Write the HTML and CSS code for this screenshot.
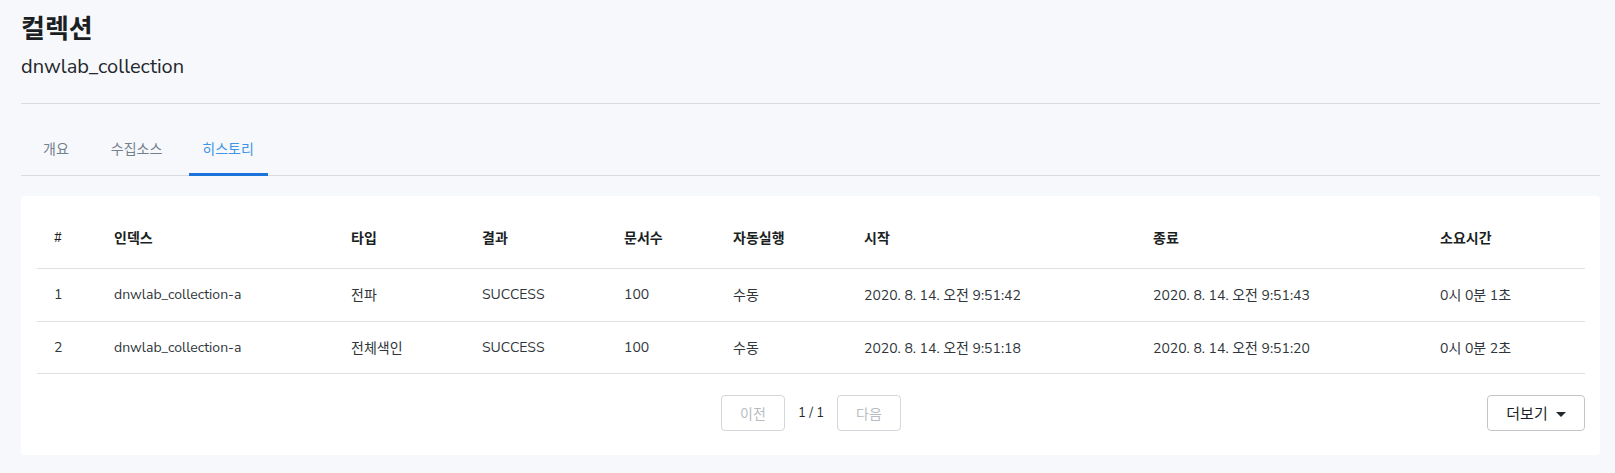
FILE: index.html
```html
<!DOCTYPE html>
<html lang="ko">
<head>
<meta charset="utf-8">
<title>컬렉션</title>
<link rel="stylesheet" href="styles.css">
</head>
<body>
<main class="page">
  <header class="page-head">
    <h1 class="title">컬렉션</h1>
    <div class="subtitle">dnwlab_collection</div>
  </header>
  <nav class="tabs">
    <a class="tab tab-1">개요</a>
    <a class="tab tab-2">수집소스</a>
    <a class="tab tab-3 active">히스토리</a>
  </nav>
  <section class="card">
    <div class="grid" role="table">
      <div class="row head" role="row">
        <div class="cell num" role="columnheader">#</div>
        <div class="cell" role="columnheader">인덱스</div>
        <div class="cell" role="columnheader">타입</div>
        <div class="cell" role="columnheader">결과</div>
        <div class="cell" role="columnheader">문서수</div>
        <div class="cell" role="columnheader">자동실행</div>
        <div class="cell" role="columnheader">시작</div>
        <div class="cell" role="columnheader">종료</div>
        <div class="cell" role="columnheader">소요시간</div>
      </div>
      <div class="row" role="row">
        <div class="cell">1</div>
        <div class="cell idx">dnwlab_collection-a</div>
        <div class="cell">전파</div>
        <div class="cell">SUCCESS</div>
        <div class="cell">100</div>
        <div class="cell">수동</div>
        <div class="cell">2020. 8. 14. 오전 9:51:42</div>
        <div class="cell">2020. 8. 14. 오전 9:51:43</div>
        <div class="cell">0시 0분 1초</div>
      </div>
      <div class="row" role="row">
        <div class="cell">2</div>
        <div class="cell idx">dnwlab_collection-a</div>
        <div class="cell">전체색인</div>
        <div class="cell">SUCCESS</div>
        <div class="cell">100</div>
        <div class="cell">수동</div>
        <div class="cell">2020. 8. 14. 오전 9:51:18</div>
        <div class="cell">2020. 8. 14. 오전 9:51:20</div>
        <div class="cell">0시 0분 2초</div>
      </div>
    </div>
    <div class="foot">
      <div class="pager">
        <button class="btn pg" disabled>이전</button>
        <span class="count">1 / 1</span>
        <button class="btn pg" disabled>다음</button>
      </div>
      <button class="btn more">더보기 <span class="caret"></span></button>
    </div>
  </section>
</main>
</body>
</html>
```

FILE: styles.css
```css
* { box-sizing: border-box; }
html, body { margin: 0; padding: 0; }
body {
  background: #f7f8fb;
  color: #23282c;
  font-family: "Nunito Sans", Lato, "Noto Sans CJK KR", sans-serif;
}
.page {
  padding: 10px 15px 0 21px;
}
.page-head {
  border-bottom: 1px solid #d8dbe0;
  padding-bottom: 24px;
}
.title {
  margin: 0;
  font-size: 26px;
  line-height: 40px;
  font-weight: 700;
  color: #1b1f23;
}
.subtitle {
  margin-top: 5px;
  font-size: 20px;
  line-height: 24px;
  color: #23282c;
}
.tabs {
  display: flex;
  margin-top: 24px;
  border-bottom: 1px solid #d8dbe0;
}
.tab {
  display: block;
  font-size: 14px;
  line-height: 20px;
  padding: 12px 13px 14px;
  color: #73818f;
  border-bottom: 2px solid transparent;
  margin-bottom: -1px;
}
.tab-1 { margin-left: 9px; }
.tab-2 { margin-left: 16px; }
.tab-3 { margin-left: 14px; }
.tab.active {
  color: #3d95e8;
  border-bottom: 3px solid #1a73d9;
  padding: 12px 14px 13px 13px;
}
.card {
  margin-top: 20px;
  background: #fff;
  border-radius: 4px;
  padding: 16px 15px 24px 16px;
}
.grid {
  font-size: 14px;
}
.row {
  display: grid;
  grid-template-columns: 60px 237px 131px 142px 109px 131px 289px 287px 1fr;
  align-items: center;
  height: 52.5px;
  border-bottom: 1px solid #dee0e3;
  color: #2f353a;
}
.row.head {
  height: 57px;
  padding-bottom: 5px;
  font-weight: 700;
  color: #1b1f23;
}
.cell {
  padding-left: 17px;
  white-space: nowrap;
}
.row.head .num { font-weight: 400; font-size: 13px; }
.cell.idx { font-size: 14px; }
.foot {
  position: relative;
  display: flex;
  justify-content: center;
  align-items: center;
  padding-top: 21px;
}
.pager {
  display: flex;
  align-items: center;
  gap: 12px;
}
.btn {
  font-family: inherit;
  font-size: 14px;
  height: 36px;
  background: #fff;
  border: 1px solid #d3d6da;
  border-radius: 4px;
  padding: 0;
}
.pg {
  width: 64px;
  color: #b8bcc0;
}
.count {
  font-size: 13px;
  color: #23282c;
  width: 28px;
  text-align: center;
}
.more {
  position: absolute;
  right: 0;
  bottom: 0;
  width: 98px;
  color: #1b1f23;
  border-color: #c2c6ca;
  font-size: 15px;
  display: flex;
  align-items: center;
  justify-content: center;
  gap: 8px;
}
.caret {
  display: inline-block;
  width: 0;
  height: 0;
  border-left: 5px solid transparent;
  border-right: 5px solid transparent;
  border-top: 5px solid #23282c;
  margin-top: 2px;
}
```
